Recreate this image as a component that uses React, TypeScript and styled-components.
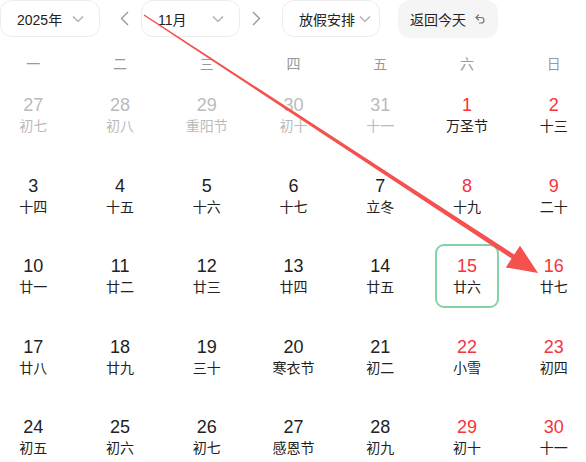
import styled, { createGlobalStyle } from 'styled-components';

const GlobalStyle = createGlobalStyle`
  html, body {
    margin: 0;
    padding: 0;
    background: #fff;
    overflow: hidden;
  }
  body {
    font-family: "Liberation Sans", "Noto Sans CJK SC", sans-serif;
    color: #222;
  }
`;

const StyledPage = styled.div`
  position: relative;
  width: 586px;
  height: 462px;
  overflow: hidden;
`;

const StyledToolbar = styled.div`
  display: flex;
  align-items: center;
  height: 37px;
  white-space: nowrap;
`;

const StyledSelect = styled.div<{ $width: number; $padRight: number }>`
  box-sizing: border-box;
  flex-shrink: 0;
  display: flex;
  align-items: center;
  justify-content: space-between;
  width: ${({ $width }) => $width}px;
  height: 37px;
  padding: 0 ${({ $padRight }) => $padRight}px 0 16px;
  border: 1px solid #ececec;
  border-radius: 12px;
  font-size: 14px;
  color: #222;
`;

const StyledTodayBtn = styled.div`
  box-sizing: border-box;
  flex-shrink: 0;
  display: flex;
  align-items: center;
  gap: 8px;
  width: 100px;
  height: 38px;
  margin-left: 18px;
  padding: 0 12px;
  background: #f5f5f5;
  border-radius: 12px;
  font-size: 14px;
  color: #222;
`;

const StyledArrowBtn = styled.div<{ $left: number; $right: number }>`
  flex-shrink: 0;
  display: flex;
  align-items: center;
  justify-content: center;
  width: 16px;
  height: 37px;
  margin-left: ${({ $left }) => $left}px;
  margin-right: ${({ $right }) => $right}px;
  color: #999;
`;

const StyledWeekRow = styled.div`
  display: grid;
  grid-template-columns: repeat(7, 1fr);
  width: 607px;
  margin: 14px 0 0 -10px;
  height: 24px;
`;

const StyledWeekday = styled.div`
  display: flex;
  align-items: center;
  justify-content: center;
  font-size: 14px;
  color: #999;
`;

const StyledGrid = styled.div`
  display: grid;
  grid-template-columns: repeat(7, 1fr);
  grid-auto-rows: 64px;
  row-gap: 16.5px;
  width: 607px;
  margin: 8px 0 0 -10px;
`;

const StyledCell = styled.div<{ $selected: boolean }>`
  box-sizing: border-box;
  justify-self: center;
  display: flex;
  flex-direction: column;
  align-items: center;
  justify-content: center;
  width: 64px;
  height: 64px;
  border: 2px solid ${({ $selected }) => ($selected ? '#82d4a7' : 'transparent')};
  border-radius: 9px;
`;

const StyledDayNum = styled.div<{ $tone: 'muted' | 'red' | 'normal' }>`
  font-size: 18px;
  line-height: 22px;
  color: ${({ $tone }) =>
    $tone === 'muted' ? '#bbb' : $tone === 'red' ? '#f7333b' : '#222'};
`;

const StyledLunar = styled.div<{ $muted: boolean }>`
  font-size: 14px;
  line-height: 20px;
  color: ${({ $muted }) => ($muted ? '#bbb' : '#222')};
`;

const StyledOverlay = styled.svg`
  position: absolute;
  left: 0;
  top: 0;
  pointer-events: none;
`;

const ChevronDown = () => (
  <svg width="12" height="8" viewBox="0 0 12 8" fill="none">
    <path d="M1 1.5 6 6.5 11 1.5" stroke="#aaa" strokeWidth="1.2" />
  </svg>
);

const Chevron = ({ dir }: { dir: 'left' | 'right' }) => (
  <svg width="9" height="15" viewBox="0 0 9 15" fill="none">
    <path
      d={dir === 'left' ? 'M8 1 1.5 7.5 8 14' : 'M1 1 7.5 7.5 1 14'}
      stroke="#999"
      strokeWidth="1.4"
    />
  </svg>
);

const UndoIcon = () => (
  <svg width="12" height="12" viewBox="0 0 24 24" fill="none" stroke="#777" strokeWidth="2.4" strokeLinecap="round" strokeLinejoin="round">
    <path d="M9 14 4 9l5-5" />
    <path d="M4 9h10.5a5.5 5.5 0 0 1 0 11H11" />
  </svg>
);

type Day = {
  num: number;
  lunar: string;
  muted?: boolean;
  selected?: boolean;
};

const weekdays = ['一', '二', '三', '四', '五', '六', '日'];

const days: Day[] = [
  { num: 27, lunar: '初七', muted: true },
  { num: 28, lunar: '初八', muted: true },
  { num: 29, lunar: '重阳节', muted: true },
  { num: 30, lunar: '初十', muted: true },
  { num: 31, lunar: '十一', muted: true },
  { num: 1, lunar: '万圣节' },
  { num: 2, lunar: '十三' },
  { num: 3, lunar: '十四' },
  { num: 4, lunar: '十五' },
  { num: 5, lunar: '十六' },
  { num: 6, lunar: '十七' },
  { num: 7, lunar: '立冬' },
  { num: 8, lunar: '十九' },
  { num: 9, lunar: '二十' },
  { num: 10, lunar: '廿一' },
  { num: 11, lunar: '廿二' },
  { num: 12, lunar: '廿三' },
  { num: 13, lunar: '廿四' },
  { num: 14, lunar: '廿五' },
  { num: 15, lunar: '廿六', selected: true },
  { num: 16, lunar: '廿七' },
  { num: 17, lunar: '廿八' },
  { num: 18, lunar: '廿九' },
  { num: 19, lunar: '三十' },
  { num: 20, lunar: '寒衣节' },
  { num: 21, lunar: '初二' },
  { num: 22, lunar: '小雪' },
  { num: 23, lunar: '初四' },
  { num: 24, lunar: '初五' },
  { num: 25, lunar: '初六' },
  { num: 26, lunar: '初七' },
  { num: 27, lunar: '感恩节' },
  { num: 28, lunar: '初九' },
  { num: 29, lunar: '初十' },
  { num: 30, lunar: '十一' },
];

// annotation arrow drawn over the calendar
const arrowPoints = (() => {
  const sx = 144, sy = 15, tx = 538, ty = 273;
  const dx = tx - sx, dy = ty - sy;
  const len = Math.hypot(dx, dy);
  const ux = dx / len, uy = dy / len;
  const nx = -uy, ny = ux;
  const head = 30, wing = 13;
  const bx = tx - ux * head, by = ty - uy * head;
  const pts = [
    [sx + nx * 0.7, sy + ny * 0.7],
    [bx + nx * 2.4, by + ny * 2.4],
    [bx + nx * wing, by + ny * wing],
    [tx, ty],
    [bx - nx * wing, by - ny * wing],
    [bx - nx * 2.4, by - ny * 2.4],
    [sx - nx * 0.7, sy - ny * 0.7],
  ];
  return pts.map(([x, y]) => `${x.toFixed(1)},${y.toFixed(1)}`).join(' ');
})();

const App = () => {
  return (
    <StyledPage>
      <GlobalStyle />
      <StyledToolbar>
        <StyledSelect $width={100} $padRight={15}>
          <span>2025年</span>
          <ChevronDown />
        </StyledSelect>
        <StyledArrowBtn $left={16} $right={9}>
          <Chevron dir="left" />
        </StyledArrowBtn>
        <StyledSelect $width={99} $padRight={15}>
          <span>11月</span>
          <ChevronDown />
        </StyledSelect>
        <StyledArrowBtn $left={8} $right={18}>
          <Chevron dir="right" />
        </StyledArrowBtn>
        <StyledSelect $width={98} $padRight={8}>
          <span>放假安排</span>
          <ChevronDown />
        </StyledSelect>
        <StyledTodayBtn>
          <span>返回今天</span>
          <UndoIcon />
        </StyledTodayBtn>
      </StyledToolbar>

      <StyledWeekRow>
        {weekdays.map((w) => (
          <StyledWeekday key={w}>{w}</StyledWeekday>
        ))}
      </StyledWeekRow>

      <StyledGrid>
        {days.map((d, i) => {
          const weekend = i % 7 >= 5;
          const tone = d.muted ? 'muted' : weekend ? 'red' : 'normal';
          return (
            <StyledCell key={i} $selected={!!d.selected}>
              <StyledDayNum $tone={tone}>{d.num}</StyledDayNum>
              <StyledLunar $muted={!!d.muted}>{d.lunar}</StyledLunar>
            </StyledCell>
          );
        })}
      </StyledGrid>

      <StyledOverlay width="586" height="462" viewBox="0 0 586 462">
        <polygon points={arrowPoints} fill="#f4514f" />
      </StyledOverlay>
    </StyledPage>
  );
};

export default App;
